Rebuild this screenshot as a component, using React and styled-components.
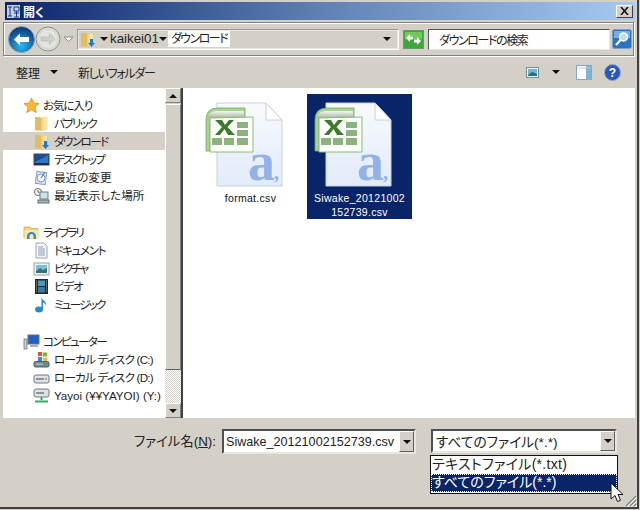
import React from "react";
import styled, { createGlobalStyle } from "styled-components";

const Global = createGlobalStyle`
  html, body { margin: 0; padding: 0; width: 640px; height: 510px; overflow: hidden; background: #d4d0c8; }
  body { font-family: "Liberation Sans", "Noto Sans CJK JP", sans-serif; font-size: 12px; color: #111; font-feature-settings: "palt"; }
  * { box-sizing: border-box; }
`;

const Window = styled.div`
  width: 639px; height: 509px; display: flex; flex-direction: column; position: relative;
  background: #d4d0c8; border-right: 2px solid #404040; border-bottom: 2px solid #404040; padding-top: 2px;
`;
const TitleBar = styled.div`
  height: 18px; margin: 0 2px 0 5px; display: flex; align-items: center; padding: 0 2px 0 0; gap: 2px;
  background: linear-gradient(90deg, #0a246a 0%, #5f80b4 50%, #a6caf0 100%);
  color: #fff; font-size: 12px; font-weight: 700;
`;
const TitleIcon = styled.svg` width: 15px; height: 15px; margin-left: 1px; flex: none; `;
const TitleText = styled.span` flex: 1; `;
const CloseBtn = styled.div`
  width: 17px; height: 13px; background: #d4d0c8; color: #111; display: flex; align-items: center; justify-content: center;
  border: 1px solid; border-color: #fff #404040 #404040 #fff;
`;
const AddressBar = styled.div`
  height: 34px; margin: 2px 3px 0 3px; display: flex; align-items: center; padding-left: 4px;
  border: 1px solid #808080; box-shadow: inset 1px 1px #fff, 1px 1px #fff;
`;
const NavIcon = styled.svg` flex: none; display: block; `;
const Breadcrumb = styled.div`
  width: 322px; height: 21px; margin-left: 3px; display: flex; align-items: center; padding-left: 1px; flex: none;
  background: #d4d0c8; border: 1px solid #808080; border-color: #9a9890 #fff #fff #9a9890; box-shadow: inset 0 0 0 1px #e8e6e0;
`;
const Crumb = styled.span`
  display: block; flex: none; height: 16px; line-height: 16px; font-size: ${p => (p.$active ? "12px" : "13.300px")}; color: #222;
  background: ${p => (p.$active ? "#fff" : "transparent")};
  padding: 0 ${p => (p.$active ? "3px" : "0")};
  letter-spacing: ${p => (p.$active ? "-1.500px" : "0")};
`;
const Caret = styled.span`
  width: 0; height: 0; flex: none; border-left: 4px solid transparent; border-right: 4px solid transparent;
  border-top: 4px solid #111; margin-left: ${p => p.$ml || 0}px; margin-right: ${p => p.$mr || 0}px;
`;
const Spacer = styled.div` flex: 1; `;
const Refresh = styled.svg` flex: none; margin-left: 4px; `;
const SearchBox = styled.div`
  width: 182px; height: 21px; margin-left: 4px; background: #fff; flex: none; padding-left: 10px; display: flex; align-items: center;
  border: 1px solid; border-color: #555 #e8e6e0 #e8e6e0 #555; font-size: 12px; color: #222; letter-spacing: -1.400px;
`;
const SearchBtn = styled.svg` flex: none; margin-left: 2px; `;
const Toolbar = styled.div`
  height: 32px; display: flex; align-items: center; padding: 0 16px 0 16px; font-size: 12px; color: #222;
`;
const ToolLabel = styled.span` margin-left: ${p => p.$ml || 0}px; letter-spacing: ${p => p.$ls || 0}px; `;
const ToolIcon = styled.svg` flex: none; margin-left: ${p => p.$ml || 0}px; `;
const Main = styled.div`
  height: 330px; margin: 0 2px 0 3px; display: flex; background: #fff;
`;
const Sidebar = styled.div`
  width: 162px; flex: none; padding-top: 8px; display: flex; flex-direction: column; gap: 19px;
  background: #fff;
`;
const Group = styled.div` display: flex; flex-direction: column; `;
const NavRow = styled.div`
  height: 18px; display: flex; align-items: center; gap: ${p => (p.$head ? "3px" : "4px")};
  padding-left: ${p => (p.$head ? "20px" : "30px")}; font-size: 11.600px; color: #222; white-space: nowrap;
  letter-spacing: ${p => p.$ls || 0}px;
  background: ${p => (p.$sel ? "#d4d0c8" : "transparent")};
`;
const SmallIcon = styled.svg` width: 17px; height: 17px; flex: none; `;
const Scrollbar = styled.div`
  width: 18px; flex: none; display: flex; flex-direction: column; background: #d4d0c8; border-right: 2px solid #404040;
`;
const ScrollBtn = styled.div`
  height: 15px; flex: none; background: #d4d0c8; display: flex; align-items: center; justify-content: center;
  border: 1px solid; border-color: #fff #808080 #808080 #fff;
`;
const ArrowUp = styled.span` width: 0; height: 0; border-left: 4px solid transparent; border-right: 4px solid transparent; border-bottom: 4px solid #111; `;
const ArrowDown = styled.span` width: 0; height: 0; border-left: 4px solid transparent; border-right: 4px solid transparent; border-top: 4px solid #111; `;
const Thumb = styled.div`
  height: 266px; flex: none; background: #d4d0c8; margin-top: 1px;
  border: 1px solid; border-color: #fff #808080 #606060 #fff;
`;
const Track = styled.div`
  flex: 1; background-color: #fff;
  background-image: conic-gradient(#d4d0c8 25%, #fff 0 50%, #d4d0c8 0 75%, #fff 0);
  background-size: 2px 2px;
`;
const FileArea = styled.div`
  flex: 1; padding: 6px 0 0 15px; display: flex; gap: 4px; align-items: flex-start; background: #fff;
`;
const Tile = styled.div`
  width: 105px; height: 125px; display: flex; flex-direction: column; align-items: center;
  background: ${p => (p.$sel ? "#0a246a" : "#fff")};
  color: ${p => (p.$sel ? "#fff" : "#111")};
`;
const TileName = styled.div`
  width: 100%; text-align: center; font-size: 10.500px; line-height: 14px; letter-spacing: 0.3px; white-space: pre-line;
`;
const Bottom = styled.div`
  flex: 1; position: relative; padding: 11px 0 0 133px; display: flex; align-items: flex-start;
`;
const Label = styled.label`
  width: 83px; flex: none; height: 25px; line-height: 25px; font-size: 13.400px; color: #222; white-space: nowrap; text-align: right;
  display: flex; justify-content: flex-end;
`;
const Combo = styled.div`
  width: ${p => p.$w}px; height: ${p => p.$h}px; margin-left: ${p => p.$ml}px; flex: none; background: #fff; display: flex; align-items: center;
  justify-content: space-between; padding: 0 0 0 ${p => p.$pl}px; font-size: ${p => p.$fs}px; color: #222;
  border: 2px solid; border-color: #505050 #e8e6e0 #e8e6e0 #505050; white-space: nowrap;
`;
const DropBtn = styled.div`
  width: 15px; height: 100%; flex: none; background: #d4d0c8; display: flex; align-items: center; justify-content: center;
  border: 1px solid; border-color: #fff #606060 #606060 #fff;
`;
const DropList = styled.div`
  position: absolute; left: 430px; top: 37px; width: 188px; height: 39px; background: #fff; border: 1px solid #111;
  font-size: 14px; display: flex; flex-direction: column; padding: 0;
`;
const DropItem = styled.div`
  height: 18px; line-height: 17px; padding-left: 1px; white-space: nowrap; letter-spacing: ${p => p.$ls || 0}px;
  background: ${p => (p.$sel ? "#0a246a" : "#fff")}; color: ${p => (p.$sel ? "#fff" : "#222")};
  outline: ${p => (p.$sel ? "1px dotted #fff" : "none")}; outline-offset: -1px;
`;
const Cursor = styled.svg` position: absolute; left: 610px; top: 64px; `;
const Grip = styled.svg` position: absolute; right: 0; bottom: 0; `;
const Under = styled.span` text-decoration: underline; `;

const FolderIcon = ({ arrow }) => (
  <SmallIcon viewBox="0 0 17 17">
    <defs>
      <linearGradient id="fg" x1="0" x2="1" y1="0" y2="0"><stop offset="0" stopColor="#f0d078" /><stop offset="1" stopColor="#fff2c0" /></linearGradient>
    </defs>
    <path d="M2 2h5l1 1v12.500H2z" fill="#e2bd62" />
    <path d="M8 3l6-1v12l-6 2z" fill="url(#fg)" stroke="#d8c080" strokeWidth=".5" />
    {arrow && <path d="M11 8h3v4h2l-3.500 4L9 12h2z" fill="#1e78d0" />}
  </SmallIcon>
);

const Star = () => (
  <SmallIcon viewBox="0 0 17 17">
    <path d="M8.500 1l2.300 5 5.200.6-3.900 3.500 1.100 5.400-4.700-2.800-4.700 2.800 1.100-5.400L1 6.600 6.200 6z" fill="#f8b838" stroke="#e08a20" strokeWidth=".8" />
  </SmallIcon>
);
const Desktop = () => (
  <SmallIcon viewBox="0 0 17 17">
    <rect x="1" y="3" width="15" height="11" fill="#1c4c94" stroke="#3a4a60" />
    <path d="M2 11l8-4 5-3v9H2z" fill="#2f78c8" />
    <rect x="1" y="12" width="15" height="2" fill="#203050" />
  </SmallIcon>
);
const Recent = () => (
  <SmallIcon viewBox="0 0 17 17">
    <path d="M3 3h10v12H3z" fill="#dce6f4" stroke="#8ca4c8" transform="rotate(8 8 9)" />
    <circle cx="8" cy="9" r="4" fill="#f4f8ff" stroke="#7c98c8" />
    <path d="M8 9l4-6" stroke="#5878b0" strokeWidth="1.200" />
  </SmallIcon>
);
const Places = () => (
  <SmallIcon viewBox="0 0 17 17">
    <circle cx="5" cy="5" r="3.600" fill="#eee" stroke="#707070" />
    <path d="M5 3v2l1.500 1" stroke="#444" fill="none" strokeWidth=".8" />
    <rect x="7" y="5" width="8" height="7" fill="#cfe2e8" stroke="#608088" />
    <rect x="5" y="13" width="11" height="3" fill="#a8b4b8" stroke="#607070" />
  </SmallIcon>
);
const Library = () => (
  <SmallIcon viewBox="0 0 17 17">
    <path d="M1 3h6l1 1.500h7V14H1z" fill="#eed27c" stroke="#c8a850" strokeWidth=".7" />
    <path d="M1.500 6h14v8.500h-14z" fill="#f8e8a8" />
    <path d="M4 15v-3a4.500 4 0 0 1 9 0v3h-2.500v-3a2 2 0 0 0-4 0v3z" fill="#3a88c8" />
  </SmallIcon>
);
const Doc = () => (
  <SmallIcon viewBox="0 0 17 17">
    <path d="M3 1h8l3 3v12H3z" fill="#f4f6fa" stroke="#9aa4b4" />
    <path d="M5 5h5M5 7h7M5 9h7M5 11h7M5 13h7" stroke="#8090a8" strokeWidth=".9" />
  </SmallIcon>
);
const Picture = () => (
  <SmallIcon viewBox="0 0 17 17">
    <rect x="1" y="3" width="15" height="12" fill="#eef2f4" stroke="#98a0a8" />
    <rect x="3" y="5" width="11" height="8" fill="#7cc0d8" />
    <path d="M3 11l4-3 3 2 4-2v5H3z" fill="#3c7078" />
  </SmallIcon>
);
const Video = () => (
  <SmallIcon viewBox="0 0 17 17">
    <rect x="2" y="1" width="13" height="15" fill="#202830" />
    <rect x="5" y="2.500" width="7" height="5.500" fill="#4898c8" />
    <rect x="5" y="9" width="7" height="5.500" fill="#3878a8" />
    <path d="M3 3h1M3 5h1M3 7h1M3 9h1M3 11h1M3 13h1M13 3h1M13 5h1M13 7h1M13 9h1M13 11h1M13 13h1" stroke="#c8a868" />
  </SmallIcon>
);
const Music = () => (
  <SmallIcon viewBox="0 0 17 17">
    <ellipse cx="6" cy="13.500" rx="4" ry="3" fill="#2c88c8" />
    <path d="M8.500 13V1.500c1 3 5 3.500 4.500 8-.6-2-2.500-3-3-3V13z" fill="#2c88c8" />
  </SmallIcon>
);
const Computer = () => (
  <SmallIcon viewBox="0 0 17 17">
    <rect x="5" y="2" width="11" height="9" fill="#2060c8" stroke="#687080" />
    <rect x="1" y="6" width="3" height="10" fill="#c8ccd0" stroke="#606870" strokeWidth=".7" />
    <rect x="7" y="12" width="8" height="2" fill="#a8b0b8" />
  </SmallIcon>
);
const DriveC = () => (
  <SmallIcon viewBox="0 0 17 17">
    <rect x="5" y="1" width="4" height="4" fill="#e85030" />
    <rect x="10" y="1.500" width="4" height="4" fill="#78b830" />
    <rect x="5" y="6" width="4" height="4" fill="#3888e0" />
    <rect x="10" y="6.500" width="4" height="4" fill="#f0c030" />
    <rect x="1" y="10.500" width="15" height="5.500" rx="1.500" fill="#708890" stroke="#506068" />
    <rect x="3" y="12.500" width="7" height="1.500" fill="#a8c0c8" />
  </SmallIcon>
);
const Drive = () => (
  <SmallIcon viewBox="0 0 17 17">
    <rect x="1" y="6" width="15" height="8" rx="2" fill="#dfe2e4" stroke="#707880" />
    <rect x="3" y="9" width="8" height="2" fill="#8c9498" />
    <circle cx="13" cy="10" r="1" fill="#58c050" />
  </SmallIcon>
);
const NetDrive = () => (
  <SmallIcon viewBox="0 0 17 17">
    <rect x="1" y="2" width="15" height="8" rx="2" fill="#dfe2e4" stroke="#707880" />
    <rect x="3" y="5" width="8" height="2" fill="#8c9498" />
    <path d="M8.500 10v3M2 14.500h13" stroke="#30b060" strokeWidth="2" />
  </SmallIcon>
);

const ExcelFile = ({ id }) => (
  <svg width="105" height="97" viewBox="0 0 105 97" style={{ display: "block", flex: "none" }}>
    <defs>
      <linearGradient id={`pg${id}`} x1="0" x2="0" y1="0" y2="1">
        <stop offset="0" stopColor="#f8fafe" /><stop offset="1" stopColor="#e2ebfa" />
      </linearGradient>
      <linearGradient id={`sh${id}`} x1="0" x2="0" y1="0" y2="1">
        <stop offset="0" stopColor="#f4f6f2" /><stop offset="1" stopColor="#a8b4a4" />
      </linearGradient>
    </defs>
    <path d="M19 9h49l16 17v66H19z" fill={`url(#pg${id})`} stroke="#c8d0dc" />
    <path d="M68 9v17h16z" fill="#fff" stroke="#c8d0dc" />
    <path d="M8 57V26q0-12 12-12h27v10H12v33z" fill="#a9d294" stroke="#6fa85a" strokeWidth=".8" />
    <path d="M11 24q0-7 8-7h27v7z" fill={`url(#sh${id})`} />
    <path d="M12 24l43-1v35H12z" fill="#fff" stroke="#8cba74" />
    <path d="M17 26h7l3 5 4-5h5l-6.500 7 7.500 8h-7l-3.500-6-4.500 6h-5l7-8z" fill="#3c7a2c" />
    <g fill="#8cb27e">
      <rect x="39" y="28" width="11" height="6" />
      <rect x="39" y="36" width="11" height="6" />
      <rect x="39" y="44" width="11" height="7" />
      <rect x="14" y="44" width="10" height="7" />
      <rect x="26" y="44" width="10" height="7" />
    </g>
    <text x="50" y="86" fontFamily="Liberation Serif, serif" fontWeight="700" fontSize="54" fill="#93b3e8">a</text>
    <text x="76" y="85" fontFamily="Liberation Serif, serif" fontWeight="700" fontSize="20" fill="#93b3e8">,</text>
  </svg>
);

export default function App() {
  return (
    <>
      <Global />
      <Window>
        <TitleBar>
          <TitleIcon viewBox="0 0 15 15">
            <rect x="1" y="1" width="13" height="13" fill="#e8eef8" opacity=".85" />
            <path d="M2 3h4M4 3v9M2 12h4M8 3h5v4H8zM8 9h5M10.500 7v6M8 13h5" stroke="#1a3a80" strokeWidth="1" fill="none" />
          </TitleIcon>
          <TitleText>開く</TitleText>
          <CloseBtn>
            <svg width="9" height="8" viewBox="0 0 9 8"><path d="M1 0l7 8M8 0L1 8" stroke="#111" strokeWidth="1.600" /></svg>
          </CloseBtn>
        </TitleBar>
        <AddressBar>
          <NavIcon width="27" height="27" viewBox="0 0 27 27">
            <defs>
              <radialGradient id="bk" cx=".5" cy=".75" r=".7"><stop offset="0" stopColor="#28b8f0" /><stop offset="1" stopColor="#0c3a78" /></radialGradient>
            </defs>
            <circle cx="13.500" cy="13.500" r="13" fill="url(#bk)" stroke="#8ca0b4" />
            <path d="M6 13.500l6-6v3.500h9v5h-9v3.500z" fill="#fff" />
          </NavIcon>
          <NavIcon width="26" height="26" viewBox="0 0 26 26">
            <circle cx="13" cy="13" r="12" fill="#d8d8d4" stroke="#909490" />
            <circle cx="13" cy="13" r="9" fill="#e4e4e0" />
            <path d="M20 13l-5.500-5.500v3.500H6v4h8.500v3.500z" fill="#cfcfcb" stroke="#b0b0ac" strokeWidth=".6" />
          </NavIcon>
          <NavIcon width="11" height="7" viewBox="0 0 11 7" style={{ marginLeft: 2 }}>
            <path d="M1 1l4.500 4.500L10 1z" fill="#f4f4f4" stroke="#909490" />
          </NavIcon>
          <Breadcrumb>
            <FolderIcon arrow />
            <Caret $ml={4} $mr={2} />
            <Crumb>kaikei01</Crumb>
            <Caret $mr={1} />
            <Crumb $active>ダウンロード</Crumb>
            <Spacer />
            <Caret $mr={7} />
          </Breadcrumb>
          <Refresh width="21" height="19" viewBox="0 0 21 19">
            <rect x=".5" y=".5" width="20" height="18" fill="#3ea83a" stroke="#6c9c64" />
            <rect x="2" y="2" width="17" height="7" fill="#72c85c" />
            <path d="M3 8l4-4v2.500h3v3H7V12zM18 11l-4 4v-2.500h-3v-3h3V7z" fill="#fff" />
          </Refresh>
          <SearchBox>ダウンロードの検索</SearchBox>
          <SearchBtn width="20" height="20" viewBox="0 0 20 20">
            <rect x=".5" y=".5" width="19" height="19" rx="2" fill="#2a72c8" stroke="#7ca0d0" />
            <rect x="2" y="2" width="16" height="7" fill="#78aee4" />
            <circle cx="11.500" cy="8" r="4" fill="#bcdcf8" stroke="#fff" strokeWidth="1.500" />
            <path d="M8.500 11l-4.500 5" stroke="#fff" strokeWidth="2.200" />
          </SearchBtn>
        </AddressBar>
        <Toolbar>
          <ToolLabel>整理</ToolLabel>
          <Caret $ml={10} />
          <ToolLabel $ml={20} $ls={-1.300}>新しいフォルダー</ToolLabel>
          <Spacer />
          <ToolIcon width="13" height="11" viewBox="0 0 13 11">
            <rect x=".5" y=".5" width="12" height="10" fill="#eef4f6" stroke="#78909c" />
            <rect x="2" y="2" width="9" height="7" fill="#70b8d0" />
            <path d="M2 8l4-3 5 2v2H2z" fill="#2e6c78" />
          </ToolIcon>
          <Caret $ml={13} />
          <ToolIcon $ml={16} width="16" height="15" viewBox="0 0 16 15">
            <rect x=".5" y=".5" width="15" height="14" fill="#fff" stroke="#88a8c0" />
            <rect x="10" y="1" width="5" height="13" fill="#7cb4d4" />
            <path d="M1 3h14" stroke="#c0d0dc" />
          </ToolIcon>
          <ToolIcon $ml={12} width="17" height="17" viewBox="0 0 17 17">
            <circle cx="8.500" cy="8.500" r="8" fill="#2a58b8" stroke="#90a4cc" />
            <text x="8.500" y="13" textAnchor="middle" fontFamily="Liberation Sans, sans-serif" fontWeight="700" fontSize="12" fill="#fff">?</text>
          </ToolIcon>
        </Toolbar>
        <Main>
          <Sidebar>
            <Group>
              <NavRow $head $ls={-1.200}><Star />お気に入り</NavRow>
              <NavRow $ls={-1.600}><FolderIcon />パブリック</NavRow>
              <NavRow $sel $ls={-1.600}><FolderIcon arrow />ダウンロード</NavRow>
              <NavRow $ls={-1.700}><Desktop />デスクトップ</NavRow>
              <NavRow><Recent />最近の変更</NavRow>
              <NavRow><Places />最近表示した場所</NavRow>
            </Group>
            <Group>
              <NavRow $head $ls={-2}><Library />ライブラリ</NavRow>
              <NavRow $ls={-1.300}><Doc />ドキュメント</NavRow>
              <NavRow $ls={-2}><Picture />ピクチャ</NavRow>
              <NavRow $ls={-1.300}><Video />ビデオ</NavRow>
              <NavRow $ls={-1.800}><Music />ミュージック</NavRow>
            </Group>
            <Group>
              <NavRow $head $ls={-1.700}><Computer />コンピューター</NavRow>
              <NavRow $ls={-0.800}><DriveC />ローカル ディスク (C:)</NavRow>
              <NavRow $ls={-0.800}><Drive />ローカル ディスク (D:)</NavRow>
              <NavRow><NetDrive />Yayoi (¥¥YAYOI) (Y:)</NavRow>
            </Group>
          </Sidebar>
          <Scrollbar>
            <ScrollBtn><ArrowUp /></ScrollBtn>
            <Thumb />
            <Track />
            <ScrollBtn><ArrowDown /></ScrollBtn>
          </Scrollbar>
          <FileArea>
            <Tile>
              <ExcelFile id="a" />
              <TileName>format.csv</TileName>
            </Tile>
            <Tile $sel>
              <ExcelFile id="b" />
              <TileName>{"Siwake_20121002\n152739.csv"}</TileName>
            </Tile>
          </FileArea>
        </Main>
        <Bottom>
          <Label><span>ファイル名(<Under>N</Under>):</span></Label>
          <Combo $w={194} $h={25} $ml={6} $pl={2} $fs={12.600}>
            Siwake_20121002152739.csv
            <DropBtn><ArrowDown /></DropBtn>
          </Combo>
          <Combo $w={186} $h={24} $ml={15} $pl={3} $fs={13.700}>
            すべてのファイル(*.*)
            <DropBtn><ArrowDown /></DropBtn>
          </Combo>
          <DropList>
            <DropItem $ls={0.300}>テキストファイル(*.txt)</DropItem>
            <DropItem $sel>すべてのファイル(*.*)</DropItem>
          </DropList>
          <Cursor width="14" height="21" viewBox="0 0 14 21">
            <path d="M1 1v16l4-3.500 2.500 6 3-1.300-2.500-5.700h5z" fill="#fff" stroke="#111" />
          </Cursor>
          <Grip width="13" height="13" viewBox="0 0 13 13">
            <path d="M12 2L2 12M12 6l-6 6M12 10l-2 2" stroke="#808080" strokeWidth="1.200" />
            <path d="M13 3L3 13M13 7l-6 6M13 11l-2 2" stroke="#fff" />
          </Grip>
        </Bottom>
      </Window>
    </>
  );
}
